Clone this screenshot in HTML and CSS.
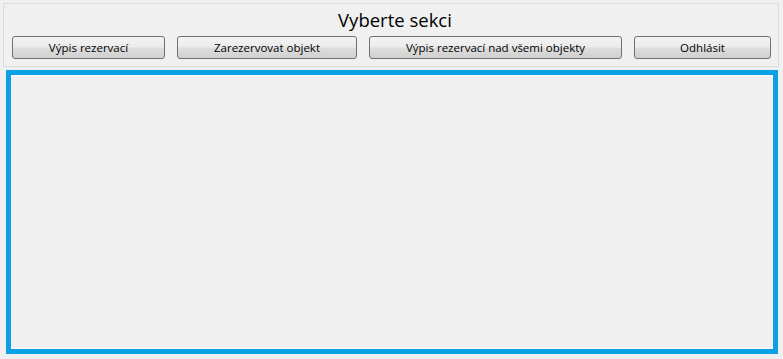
FILE: index.html
```html
<!DOCTYPE html>
<html lang="cs">
<head>
<meta charset="utf-8">
<title>Vyberte sekci</title>
<link rel="stylesheet" href="styles.css">
</head>
<body>
<div class="page">
  <header class="header">
    <h1 class="title">Vyberte sekci</h1>
    <nav class="buttons">
      <button class="btn btn-1">Výpis rezervací</button>
      <button class="btn btn-2">Zarezervovat objekt</button>
      <button class="btn btn-3">Výpis rezervací nad všemi objekty</button>
      <button class="btn btn-4">Odhlásit</button>
    </nav>
  </header>
  <main class="content"></main>
</div>
</body>
</html>
```
FILE: styles.css
```css
html, body {
  margin: 0;
  padding: 0;
  background: #f0f0f0;
}
.page {
  width: 783px;
  height: 359px;
  box-sizing: border-box;
  padding: 3px 4px 0 3px;
  font-family: "Open Sans", "Noto Sans", sans-serif;
}
.header {
  height: 64px;
  box-sizing: border-box;
  border: 1px solid #dcdcdc;
  background: #f0f0f0;
  padding: 0 0 0 8px;
  display: flex;
  flex-direction: column;
}
.title {
  margin: 0;
  height: 32px;
  line-height: 30px;
  padding-top: 1px;
  box-sizing: border-box;
  text-align: center;
  font-weight: normal;
  font-size: 18.5px;
  color: #000;
}
.buttons {
  display: flex;
  gap: 12px;
}
.btn {
  height: 23px;
  box-sizing: border-box;
  border: 1px solid #707070;
  border-radius: 3px;
  background: linear-gradient(to bottom, #f3f3f3 0%, #ececec 45%, #dddddd 55%, #d0d0d0 100%);
  font-family: "Open Sans", "Noto Sans", sans-serif;
  font-size: 11.5px;
  color: #000;
  padding: 0;
  line-height: 20px;
}
.btn-1 { width: 153px; }
.btn-2 { width: 180px; }
.btn-3 { width: 253px; }
.btn-4 { width: 137px; }
.content {
  display: block;
  margin: 3px 1px 0 3px;
  width: 772px;
  height: 284px;
  box-sizing: border-box;
  border: 5px solid #0ba1e4;
  box-shadow: inset 0 0 0 1px #fafafa;
  background: #f0f0f0;
}
```
